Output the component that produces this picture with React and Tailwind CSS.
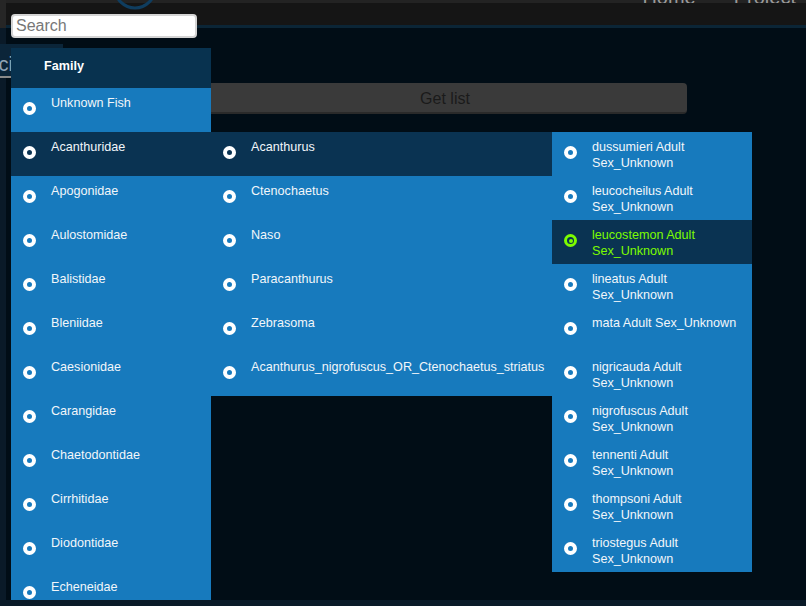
import React, { useState } from "react";

// --- data ---
const families = [
  "Unknown Fish",
  "Acanthuridae",
  "Apogonidae",
  "Aulostomidae",
  "Balistidae",
  "Bleniidae",
  "Caesionidae",
  "Carangidae",
  "Chaetodontidae",
  "Cirrhitidae",
  "Diodontidae",
  "Echeneidae",
  "Ephippidae",
  "Fistulariidae",
];

const genera = [
  "Acanthurus",
  "Ctenochaetus",
  "Naso",
  "Paracanthurus",
  "Zebrasoma",
  "Acanthurus_nigrofuscus_OR_Ctenochaetus_striatus",
];

const species = [
  "dussumieri",
  "leucocheilus",
  "leucostemon",
  "lineatus",
  "mata",
  "nigricauda",
  "nigrofuscus",
  "tennenti",
  "thompsoni",
  "triostegus",
].map((s) => `${s} Adult Sex_Unknown`);

function Radio({ checked }) {
  if (checked) {
    return (
      <span className="mt-[14px] flex h-[13px] w-[13px] shrink-0 items-center justify-center rounded-full border-[3px] border-[#7cfc00]">
        <span className="h-[4px] w-[4px] rounded-full bg-[#7cfc00]" />
      </span>
    );
  }
  return (
    <span className="mt-[14px] h-[13px] w-[13px] shrink-0 rounded-full border-[4px] border-white" />
  );
}

function Item({ label, selected, active, textWidth, onClick }) {
  return (
    <div
      onClick={onClick}
      className={`flex h-[44px] shrink-0 cursor-pointer pl-[12px] ${
        selected ? "bg-[#0a3352]" : "bg-[#177abd]"
      }`}
    >
      <Radio checked={active} />
      <span
        className={`ml-[15px] pt-[8px] text-[12.6px] leading-[15.5px] ${textWidth} ${
          active ? "text-[#7cfc00]" : "text-[#f2f6fa]"
        }`}
      >
        {label}
      </span>
    </div>
  );
}

export default function App() {
  const [family, setFamily] = useState(1);
  const [genus, setGenus] = useState(0);
  const [pick, setPick] = useState(2);

  return (
    <div className="relative flex h-[606px] w-[806px] flex-col overflow-hidden bg-[#0a1a28] font-['Liberation_Sans',Arial,sans-serif]">
      {/* header */}
      <div className="flex h-[28px] shrink-0 flex-col border-l-[6px] border-[#262626]">
        <div className="flex h-[3px] shrink-0 justify-end gap-[38px] overflow-visible bg-[#232323] pr-[10px] text-[20px] leading-[20px] text-[#9a9a9a]">
          <span className="-mt-[13px]">Home</span>
          <span className="-mt-[13px]">Project</span>
        </div>
        <div className="flex h-[22px] shrink-0 bg-[#151515] pl-[105px]">
          <svg width="48" height="22" viewBox="0 0 48 22" className="-mt-[3px]">
            <circle cx="24" cy="-12" r="20" fill="none" stroke="#0f3d5f" strokeWidth="3" />
          </svg>
        </div>
        <div className="h-[3px] shrink-0 bg-[#0b2536]" />
      </div>

      {/* page */}
      <div className="flex h-[572px] shrink-0 pl-[6px]">
        <div className="flex flex-1 flex-col bg-[#010d16]">
          <div className="-ml-[6px] mt-[16px] h-[34px] w-[63px] overflow-hidden border-b-2 border-[#8a8a8a] bg-[#0b2539]">
            <span className="-ml-[37px] block whitespace-nowrap pt-[5px] text-[20px] text-[#8fa3b5]">
              Species
            </span>
          </div>
          <button className="ml-[197px] mt-[5px] h-[31px] w-[484px] rounded-[4px] border-b-2 border-[#2a2a2a] bg-[#3a3a3a] pt-[2px] text-[16px] text-[#1a1a1a]">
            Get list
          </button>
        </div>
      </div>

      {/* cascader dropdown */}
      <div className="absolute left-[11px] top-[14px] flex flex-col">
        <input
          placeholder="Search"
          className="h-[24px] w-[186px] rounded-[4px] border-2 border-[#d4d4d4] bg-white px-[3px] text-[16px] text-[#333] placeholder:text-[#777] outline-none"
        />
        <div className="mt-[10px] flex items-start">
          <div className="flex h-[552px] w-[200px] flex-col overflow-hidden">
            <div className="flex h-[40px] shrink-0 items-center bg-[#08324f] pl-[33px] pb-[3px] text-[12.6px] font-bold text-white">
              Family
            </div>
            {families.map((f, i) => (
              <Item
                key={f}
                label={f}
                selected={i === family}
                textWidth="w-[150px]"
                onClick={() => setFamily(i)}
              />
            ))}
          </div>
          <div className="mt-[84px] flex w-[341px] flex-col">
            {genera.map((g, i) => (
              <Item
                key={g}
                label={g}
                selected={i === genus}
                textWidth="whitespace-nowrap"
                onClick={() => setGenus(i)}
              />
            ))}
          </div>
          <div className="mt-[84px] flex w-[200px] flex-col">
            {species.map((s, i) => (
              <Item
                key={s}
                label={s}
                selected={i === pick}
                active={i === pick}
                textWidth="w-[152px]"
                onClick={() => setPick(i)}
              />
            ))}
          </div>
        </div>
      </div>

      {/* bottom frame */}
      <div className="absolute bottom-0 left-0 h-[6px] w-full bg-[#0a1a28]" />
    </div>
  );
}
